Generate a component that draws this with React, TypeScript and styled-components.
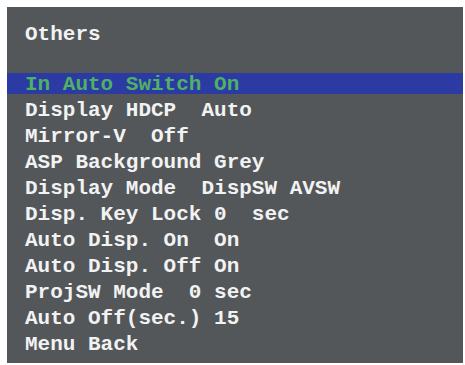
import React from "react";
import styled, { createGlobalStyle } from "styled-components";

const Global = createGlobalStyle`
  html, body { margin: 0; padding: 0; background: #ffffff; }
  body { font-family: "Nimbus Mono PS", "Courier New", "FreeMono", "Liberation Mono", monospace; }
`;

const Page = styled.div`
  width: 465px;
  height: 365px;
  box-sizing: border-box;
  padding: 7px 2px 2px 7px;
  background: #ffffff;
`;

const Panel = styled.div`
  width: 456px;
  height: 356px;
  background: #53575a;
  display: flex;
  flex-direction: column;
  padding-top: 15px;
  box-sizing: border-box;
  font-family: "Nimbus Mono PS", "Courier New", "FreeMono", "Liberation Mono", monospace;
  font-weight: bold;
  font-size: 21px;
  color: #f2f2f2;
`;

const Title = styled.div`
  height: 26px;
  line-height: 26px;
  padding-left: 18px;
  margin-bottom: 24px;
  white-space: pre;
`;

const Row = styled.div<{ $selected?: boolean }>`
  height: 26px;
  line-height: 26px;
  padding-left: 18px;
  white-space: pre;
  color: ${(p) => (p.$selected ? "#4fb163" : "#f2f2f2")};
  background: ${(p) =>
    p.$selected
      ? "linear-gradient(to bottom, transparent 1px, #2c3aa4 1px, #2c3aa4 22px, transparent 22px)"
      : "transparent"};
`;

const items = [
  "In Auto Switch On",
  "Display HDCP  Auto",
  "Mirror-V  Off",
  "ASP Background Grey",
  "Display Mode  DispSW AVSW",
  "Disp. Key Lock 0  sec",
  "Auto Disp. On  On",
  "Auto Disp. Off On",
  "ProjSW Mode  0 sec",
  "Auto Off(sec.) 15",
  "Menu Back",
];

export default function App() {
  return (
    <>
      <Global />
      <Page>
        <Panel>
          <Title>Others</Title>
          {items.map((t, i) => (
            <Row key={i} $selected={i === 0}>
              {t}
            </Row>
          ))}
        </Panel>
      </Page>
    </>
  );
}
